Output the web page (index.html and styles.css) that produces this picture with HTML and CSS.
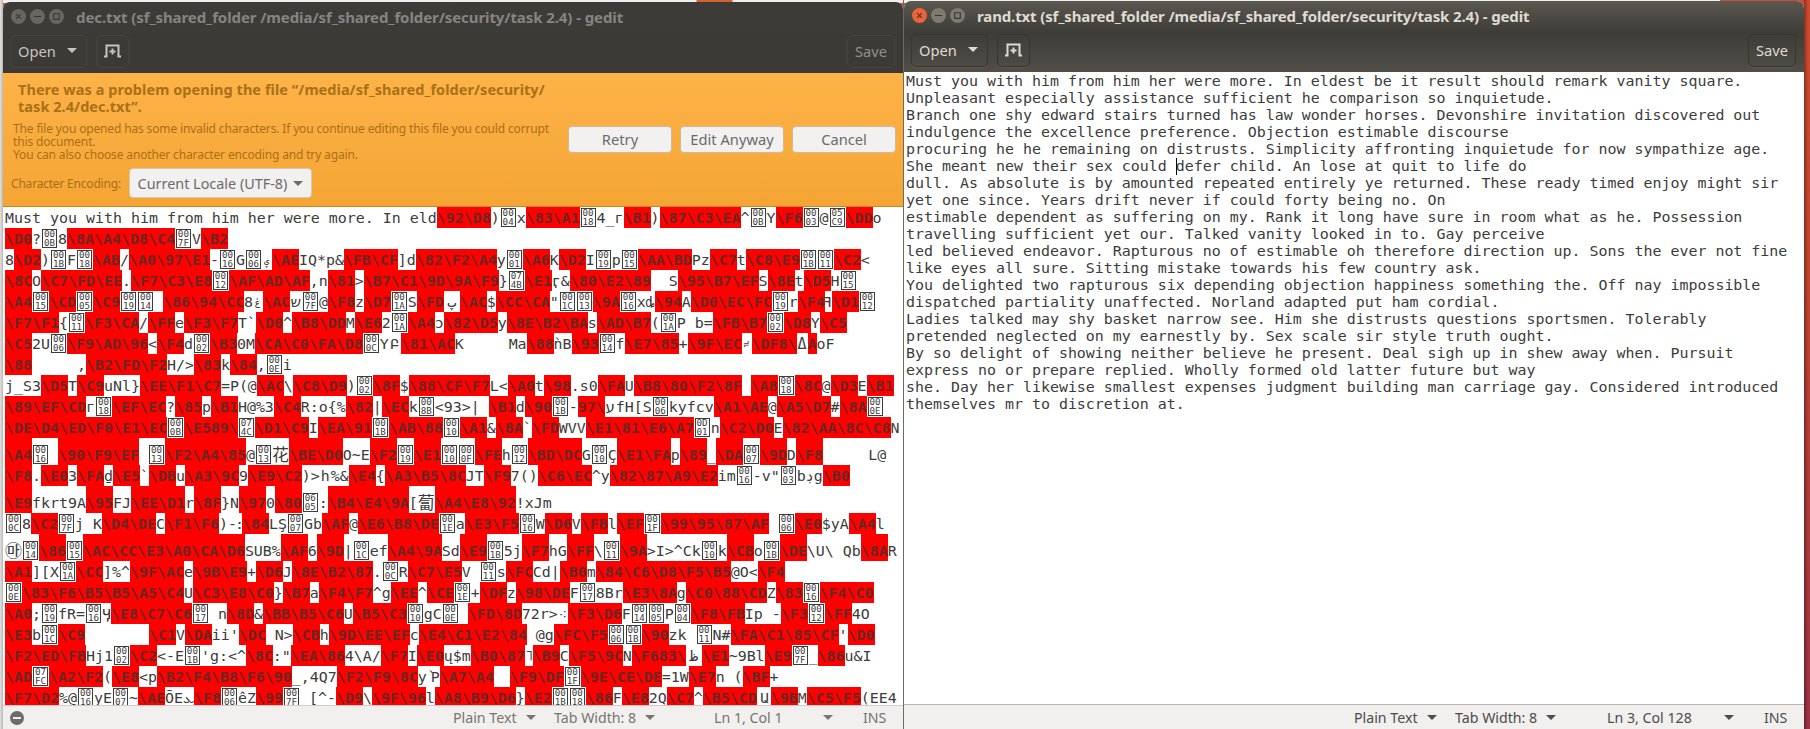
FILE: index.html
```html
<!DOCTYPE html>
<html lang="en">
<head>
<meta charset="utf-8">
<title>gedit</title>
<link rel="stylesheet" href="styles.css">
</head>
<body>
<div class="desktop">
<section class="window unfocused">
<header class="titlebar">
<span class="ctl close"><svg viewBox="0 0 16 16"><path d="M5.5 5.5l5 5M10.5 5.5l-5 5"/></svg></span>
<span class="ctl"><svg viewBox="0 0 16 16"><path d="M4 8h8"/></svg></span>
<span class="ctl"><svg viewBox="0 0 16 16"><path d="M5 5h6v6H5z"/></svg></span>
<h1 class="title title-dec">dec.txt (sf_shared_folder /media/sf_shared_folder/security/task 2.4) - gedit</h1>
</header>
<div class="toolbar">
<button class="tool open"><span>Open</span><i class="arrow"></i></button>
<button class="tool newtab"><svg width="17" height="14" viewBox="0 0 17 14"><path d="M0 12.5h2.5V1.5h12v11H17M8.500 4.500v6M5.500 7.500h6"/></svg></button>
<button class="tool save">Save</button>
</div>
<div class="infobar">
<div class="message">
<p class="primary"><span class="p1">There was a problem opening the file “/media/sf_shared_folder/security/</span><br><span class="p2">task 2.4/dec.txt”.</span></p>
<p class="secondary"><span class="s1">The file you opened has some invalid characters. If you continue editing this file you could corrupt</span><br>this document.<br><span class="s3">You can also choose another character encoding and try again.</span></p>
<div class="encoding"><span class="enc-label">Character Encoding:</span><button class="combo"><span>Current Locale (UTF-8)</span><i class="arrow"></i></button></div>
</div>
<div class="actions"><button>Retry</button><button>Edit Anyway</button><button>Cancel</button></div>
</div>
<div class="editor dump">
<div>Must you with him from him her were more. In eld<b>\92\D8</b>)<u>0004</u>x<b>\83\A1</b><u>0018</u>4_г<b>\B1</b>)<b>\87\C3\EA</b>^<u>000B</u>Y<b>\F6</b><u>0003</u>@<u>05C9</u><b>\DD</b>o</div>
<div><b>\D0</b>?<u>000B</u>8<b>\8A\A4\D8\C4</b><u>007F</u>V<b>\B2</b></div>
<div>8<b>\D2</b>)<u>001B</u>F<u>0018</u><b>\AB</b>/<b>\A0\97\E1</b>-<u>0016</u>G<u>0006</u><i class="g10 small">ۑ</i><b>\AE</b>IQ*p&amp;<b>\FB\CF</b>]d<b>\82\F2\A4</b>y<u>0001</u><b>\A6</b>K<b>\D2</b>I<u>0019</u>p<u>0015</u><b>\AA\BD</b>Pz<b>\C7</b>t<b>\C8\E9</b><u>001B</u><u>0011</u><b>\C2</b>&lt;</div>
<div><b>\8C</b>O<b>\C7\FD\EE</b>.<b>\F7\C3\E8</b><u>0012</u><b>\AF\AD\AF</b>,n<b>\81</b>&gt;<b>\B7\C1\9D\9A\F9</b>}<u>074B</u><b>\E1</b><i>ӷ</i>&amp;<b>\80\E2\89</b>  S<b>\95\B7\EF</b>S<b>\8E</b>t<b>\D5</b>H<u>0015</u></div>
<div><b>\A4</b><u>0015</u><b>\CD</b><u>0005</u><b>\C9</b><u>0019</u><u>0014</u> <b>\86\94\CC</b>8<i class="g10 small">ݟ</i><b>\AC</b><i class="g12">ש</i><u>007F</u>@<b>\F8</b>z<b>\D7</b><u>001A</u>S<b>\FD</b><i class="g16">پ</i><b>\AC</b>$<b>\CC\CA</b>"<u>001C</u><u>0013</u><b>\9A</b><u>0016</u>x<i>ȡ</i><b>\94</b>A<b>\D0\EC\FC</b><u>0019</u>r<b>\F4</b><i class="g7 flip">F</i><b>\D1</b><u>0012</u></div>
<div><b>\F7\F1</b>{<u>0011</u><b>\F3\CA</b>/<b>\FF</b>e<b>\F3\F7</b>T`<b>\D0</b>^<b>\B8\DD</b>M<b>\E6</b>2<u>001A</u><b>\A4</b><i>ɔ</i><b>\82\D5</b>y<b>\8E\B2\BA</b>s<b>\AD\B7</b>(<u>001A</u>P b=<b>\FB\B7</b><u>0002</u><b>\D8</b>Y<b>\C5</b></div>
<div><b>\C5</b>2U<u>0006</u><b>\F9\AD\96</b>&lt;<b>\F4</b>d<u>0002</u><b>\B3</b>0M<b>\CA\C0\FA\D8</b><u>000C</u>Y<i class="g12">Բ</i><b>\81\AC</b>K	Ma<b>\88</b>ǹB<b>\93</b><u>0014</u>f<b>\E7\85</b>+<b>\9F\EC</b><i class="g10 small">≓</i><b>\DF8\</b><i class="g11">Δ</i><b>A</b>oF</div>
<div><b>\88</b>	,<b>\B2\FD\F2</b>H/&gt;<b>\83</b>k<b>\84</b>,<u>000E</u>i</div>
<div>j_S3<b>\D5</b>T<b>\C9</b>uNl}<b>\EE\F1\C7</b>=P(@<b>\AC</b>\<b>\C8\D9</b>)<u>0002</u><b>\8F</b>$<b>\88\CF\F7</b>L&lt;<b>\A0</b>t<b>\98</b>.s0<b>\FA</b>U<b>\B8\80\F2\8F</b> <b>\A8</b><u>0018</u><b>\8C</b>@<b>\D3</b>E<b>\B1</b></div>
<div><b>\89\EF\CD</b>г<u>0018</u><b>\EF\EC</b>?<b>\85</b>p<b>\B1</b>H@%3<b>\C4</b>R:o{%<b>\82</b>|<b>\EC</b>k<u>008B</u>&lt;93&gt;| <b>\B1</b>d<b>\90</b><u>001B</u>-<b>97\</b><i class="g11">ע</i>fH[S<u>0006</u>kyfcv<b>\A1\AE</b>@<b>\A5\D7</b>#<b>\8A</b><u>000E</u></div>
<div><b>\DE\D4\ED\F0\E1\EC</b><u>000B</u><b>\E589\</b><u>074C</u><b>\D1\C9</b>I<b>\EA\91</b><u>001B</u><b>\AB\88</b><u>0010</u><b>\A1</b>&amp;<b>\8A</b>`<b>\FD</b>WVV<b>\E1\81\E6\A7</b><u>0D01</u>n<b>\C2\D0</b>E<b>\82\AA\8C\C8</b>N</div>
<div class="tall"><b>\A4</b><u>0016</u> <b>\90\F9\EF</b> <u>0013</u><b>\F2\A4\85</b>@<u>0013</u><i class="g17">花</i><b>\BE\D0</b>O~E<b>\F2</b><u>0019</u><b>\E1</b><u>0010</u><u>000F</u><b>\FE</b>h<u>0012</u><b>\BD\DC</b>G<u>0010</u><i>Ç</i><b>\E1\FA</b>p<b>\89</b>_<b>\DA</b><u>0007</u><b>\9D</b>D<b>\F8</b>	L@</div>
<div><b>\F8</b>.<b>\E0</b>3<b>\FA</b><i>ḏ</i><b>\E5</b>`<b>\DB</b>u<b>\A3\9C</b>9<b>\E9\C2</b>)&gt;<i class="g11">հ</i>%&amp;<b>\E4</b>{<b>\A3\B5\8C</b>JT<b>\F9</b>7()<b>\C6\EC</b>^y<b>\82\87\A9\E2</b>im<u>0016</u>-v"<u>0003</u>b<i class="g8">ڊ</i>g<b>\B0</b></div>
<div class="tall"><b>\E9</b>fkrt9A<b>\95</b>FJ<b>\EE\D1</b>r<b>\8F</b>}N<b>\97</b>0<b>\80</b><u>0605</u>:<b>\B4\E4\9A</b>[<i class="g17">蔔</i><b>\A4\E8\92</b>!xJm</div>
<div><u>000C</u>8<b>\C2</b><u>007F</u>j K<b>\D4\DE</b>C<b>\F1\F6</b>)<i class="g14">-:</i><b>\84</b>LŞ<u>0007</u>Gb<b>\AF</b>@<b>\E6\B8\DE</b><u>001E</u>a<b>\E3\F5</b><u>0016</u>W<b>\D6</b>V<b>\FB</b>l<b>\EF</b><u>001F</u><b>\99\95\87\AF</b> <u>0006</u><b>\E0</b>$yA<b>\A4</b>l</div>
<div class="tall"><i class="g17">㉲</i><u>0014</u><b>\86</b><u>0015</u><b>\AC\CC\E3\A0\CA\D6</b>SUB%<b>\AF</b>6<b>\9D</b>|<u>001C</u>ef<b>\A4\9A</b>Sd<b>\E9</b><u>001B</u>5j<b>\F7</b>hG<b>\FF</b>\<u>0011</u><b>\9A</b>&gt;I&gt;^Ck<u>0010</u>k<b>\CB</b>o<u>001B</u><b>\DE</b>\U\ Qb<b>\8A</b>R</div>
<div><b>\A1</b>][X<u>001A</u><b>\CC</b>]%^<b>\9F\AC</b>e<b>\9B\E9</b>+<b>\D6</b>J<b>\8E\B2\87</b>.<u>000C</u>R<b>\C7\E5</b>V <u>0011</u>s<b>\FC</b>Cd|<b>\B0</b>m<b>\84\C6\D8\F5\B5</b>@O&lt;<b>\F4</b></div>
<div><u>000E</u><b>\83\F6\B5\B5\A5\C4</b>U<b>\C3\E8\C0</b>}<b>\B7</b>a<b>\F4\F7</b>^g<b>\EE</b>^<b>\CE</b><u>001E</u>+<b>\DF</b>z<b>\98\DE</b>F<u>0017</u>8Br<b>\E3\8A</b>g<b>\C0\88\CD</b>Z<b>\83</b><u>0016</u><b>\F4\C0</b></div>
<div><b>\A0</b>;<u>0019</u>fR=<u>0016</u><i>Ӌ</i><b>\E8\C7\C6</b><u>0017</u> n<b>\8D</b>&amp;<b>\BB\B5\C6</b>U<b>\B5\C3</b><u>0010</u>gC<u>000E</u> <b>\FD\8D</b>72r&gt;<i class="g10">⁖</i><b>\F3\D6</b>F<u>0014</u><u>0005</u>P<u>0004</u><b>\F8\FB</b>Ip -<b>\F3</b><u>0012</u><b>\FF</b>4O</div>
<div><b>\E3</b>b<u>001C</u><b>\C9</b>	<b>\C1</b>V<b>\DA</b>ii'<b>\DC</b> N&gt;<b>\CB</b>h<b>\9D\EE\EF</b>c<b>\E4\C1\E2\84</b> @g<b>\FC\F5</b><u>0006</u><u>001B</u><b>\90</b>zk <u>0011</u>N#<b>\FA\C1\85\CF</b>'<b>\D0</b></div>
<div><b>\F2\ED\FB</b>Hj1<u>0002</u><b>\C2</b>&lt;-E<u>001B</u>'g:&lt;^<b>\8C</b>:"<b>\EA\86</b>4\A/<b>\F7</b>I<b>\E0</b>ų$m<b>\B0\87</b><i class="g8">˥</i><b>\B9</b>C<b>\F5\9C</b>N<b>\F683\</b><i class="g16">ظ</i><b>\E1</b>~9Bl<b>\E9</b><u>007F</u>_<b>\86</b>u&amp;I</div>
<div><b>\AD</b><u>07FC</u><b>\A2\F2</b>(<b>\E8</b>&lt;p<b>\B2\F4\B8\F6\90</b>_,4Q7<b>\F2\F9\8C</b>y<i class="g4">՝</i>P<b>\A7\A4</b><i class="g16"></i><b>\F9\DF</b><u>001F</u><b>\9E\CE\DE</b>=1W<b>\E7</b>n (<b>\BF</b>+</div>
<div><b>\F7\D2</b>%@<u>0016</u>yE<u>0007</u>~<b>\AE</b>ÕE<i class="g11">ܥ</i><b>\F8</b><u>0006</u>êZ<b>\99</b><u>007F</u> [^-<b>\D9</b>\<b>\9F\96</b>l<b>\A8\B9\D6</b>}<b>\E2</b><u>001B</u><u>0018</u><b>\86</b>F<b>\E8</b>2Q<b>\C7</b>^<b>\B5\CD</b><i class="g14">Ա</i><b>\9B</b>M<b>\C5\F5</b>(EE4</div>
</div>
<footer class="statusbar"><svg class="stop" width="14" height="14" viewBox="0 0 14 14"><circle cx="7" cy="7" r="7"/><path d="M3 7h8"/></svg><span class="lang">Plain Text</span><i class="arrow"></i><span class="tab">Tab Width: 8</span><i class="arrow"></i><span class="pos">Ln 1, Col 1</span><i class="arrow"></i><span class="ins">INS</span></footer>
</section>
<div class="seam"></div>
<section class="window focused">
<header class="titlebar">
<span class="ctl close"><svg viewBox="0 0 16 16"><path d="M5.5 5.5l5 5M10.5 5.5l-5 5"/></svg></span>
<span class="ctl"><svg viewBox="0 0 16 16"><path d="M4 8h8"/></svg></span>
<span class="ctl"><svg viewBox="0 0 16 16"><path d="M5 5h6v6H5z"/></svg></span>
<h1 class="title title-rand">rand.txt (sf_shared_folder /media/sf_shared_folder/security/task 2.4) - gedit</h1>
</header>
<div class="toolbar">
<button class="tool open"><span>Open</span><i class="arrow"></i></button>
<button class="tool newtab"><svg width="17" height="14" viewBox="0 0 17 14"><path d="M0 12.5h2.5V1.5h12v11H17M8.500 4.500v6M5.500 7.500h6"/></svg></button>
<button class="tool save">Save</button>
</div>
<pre class="editor plain">Must you with him from him her were more. In eldest be it result should remark vanity square.
Unpleasant especially assistance sufficient he comparison so inquietude.
Branch one shy edward stairs turned has law wonder horses. Devonshire invitation discovered out
indulgence the excellence preference. Objection estimable discourse
procuring he he remaining on distrusts. Simplicity affronting inquietude for now sympathize age.
She meant new their sex could <span class="caret"></span>defer child. An lose at quit to life do
dull. As absolute is by amounted repeated entirely ye returned. These ready timed enjoy might sir
yet one since. Years drift never if could forty being no. On
estimable dependent as suffering on my. Rank it long have sure in room what as he. Possession
travelling sufficient yet our. Talked vanity looked in to. Gay perceive
led believed endeavor. Rapturous no of estimable oh therefore direction up. Sons the ever not fine
like eyes all sure. Sitting mistake towards his few country ask.
You delighted two rapturous six depending objection happiness something the. Off nay impossible
dispatched partiality unaffected. Norland adapted put ham cordial.
Ladies talked may shy basket narrow see. Him she distrusts questions sportsmen. Tolerably
pretended neglected on my earnestly by. Sex scale sir style truth ought.
By so delight of showing neither believe he present. Deal sigh up in shew away when. Pursuit
express no or prepare replied. Wholly formed old latter future but way
she. Day her likewise smallest expenses judgment building man carriage gay. Considered introduced
themselves mr to discretion at.</pre>
<footer class="statusbar"><span class="lang">Plain Text</span><i class="arrow"></i><span class="tab">Tab Width: 8</span><i class="arrow"></i><span class="pos">Ln 3, Col 128</span><i class="arrow"></i><span class="ins">INS</span></footer>
</section>
</div>
</body>
</html>
```
FILE: styles.css
```css
* { box-sizing: border-box; }
body { margin: 0; width: 1810px; height: 729px; overflow: hidden; font: 14.7px "Noto Sans", "Open Sans", sans-serif; }
h1, p, pre { margin: 0; }
button { font: inherit; color: inherit; padding: 0; margin: 0; }
.desktop {
  display: flex; height: 729px; padding-left: 3px;
  background:
    linear-gradient(90deg, #e4e2e0, #b9b6b2) 0 0 / 3px 100% no-repeat,
    linear-gradient(90deg, #efeeec 245px, #d2622f 246px 281px, #efeeec 282px) 451px 0 / 453px 3px no-repeat,
    linear-gradient(#f0efed, #f0efed) 0 0 / 1720px 3px no-repeat,
    linear-gradient(90deg, #0005, #0000) 1804px 0 / 4px 100% no-repeat,
    linear-gradient(#cc4a2f, #c0432f 40%, #9c3245);
}
.seam { width: 1px; background: #6d6a66; }
.window { width: 900px; display: flex; flex-direction: column; overflow: hidden; background: #fff; }
.unfocused { margin-top: 2px; border-radius: 7px 7px 0 0; }
.focused { margin-top: 1px; border-radius: 7px 7px 0 0; }

.titlebar { flex: none; height: 31px; display: flex; align-items: center; gap: 4px; padding: 0 0 2px 8px; background: #3d3b37; color: #868480; }
.focused .titlebar { background: linear-gradient(#5a5850, #3d3c37); color: #dfdbd2; }
.ctl { width: 15px; height: 15px; border-radius: 50%; background: #686661; display: flex; }
.ctl svg { width: 15px; height: 15px; fill: none; stroke: #3a3935; stroke-width: 1.2; }
.focused .ctl { background: #7d7a72; }
.focused .close { background: #ee6336; }
.title { font-size: 15px; font-weight: 700; white-space: nowrap; margin-left: 8px; line-height: 28px; }
.title-dec { letter-spacing: -0.09px; }
.title-rand { letter-spacing: -0.13px; }

.toolbar { flex: none; height: 40px; display: flex; padding: 2px 8px 5px 7px; background: #3b3a36; color: #c6c4bf; }
.focused .toolbar { background: linear-gradient(#3d3c37, #504e47); color: #dfdbd2; }
.tool { height: 33px; border: 1px solid #45443f; border-radius: 5px; background: none; display: flex; align-items: center; justify-content: center; padding-bottom: 2px; }
.focused .tool { border-color: #38372f; box-shadow: 0 1px #5a5850; }
.open { width: 77px; gap: 11px; padding-right: 2px; }
.newtab { width: 33px; margin-left: 9px; }
.newtab svg { fill: none; stroke: currentColor; stroke-width: 2; }
.save { width: 48px; margin-left: auto; }
.unfocused .save { color: #92908b; }
.arrow { display: inline-block; border: 5px solid transparent; border-top-color: currentColor; border-bottom: 0; }

.infobar { flex: none; height: 134px; display: flex; background: linear-gradient(#feb348, #f4a534); border-bottom: 1px solid #c98724; color: #a87019; }
.message { width: 552px; padding: 8px 0 0 8px; white-space: nowrap; }
.primary { font-size: 14.5px; font-weight: 700; line-height: 17px; padding-left: 7px; letter-spacing: 0.05px; }
.secondary { font-size: 12px; line-height: 13px; padding: 7px 0 0 2px; letter-spacing: -0.15px; }
.encoding { display: flex; align-items: center; margin-top: 7px; }
.enc-label { width: 118px; font-size: 12px; letter-spacing: -0.2px; }
.combo { width: 183px; height: 30px; display: flex; align-items: center; justify-content: center; gap: 6px; border: 1px solid #d5c7b3; border-radius: 4px; background: #f2f1f0; color: #6b6b6b; white-space: nowrap; font-size: 14.4px; }
.actions { display: flex; gap: 8px; padding: 53px 0 0 13px; }
.actions button { width: 104px; height: 27px; padding-bottom: 2px; border: 1px solid #cbbba5; border-radius: 4px; background: #f2f1f0; color: #6b6b6b; line-height: 22px; }

.editor { flex: 1; min-height: 0; overflow: hidden; padding-left: 2px; background: #fff; color: #3c3c3c; font-family: "DejaVu Sans Mono", "DejaVu Sans", "Noto Sans CJK SC", monospace; font-size: 14.95px; white-space: pre; }
.plain { line-height: 17px; padding-top: 1px; }
.caret { display: inline-block; width: 1px; height: 17px; margin-right: -1px; background: #000; vertical-align: top; }
.dump { white-space: normal; }
.dump > div { height: 21px; line-height: 22px; white-space: pre; tab-size: 8; }
.dump > .tall { height: 27px; padding-top: 6px; background: none; }
.dump b, .dump u, .dump i { display: inline-block; height: 21px; vertical-align: top; text-decoration: none; font-style: normal; }
.dump b { background: #f00; color: #6c2620; }
.dump .tall b { box-shadow: 0 -6px #f00; }
.dump u { width: 15px; height: 19px; margin: 1px; border: 1px solid #3c3c3c; font-size: 9.2px; line-height: 9px; word-break: break-all; white-space: normal; overflow: hidden; text-align: center; }
.dump u::before { content: ""; display: block; margin-top: -1px; }
.dump i { width: 9px; text-align: center; }
.dump i.g4 { width: 4px; }
.dump i.g7 { width: 7px; }
.dump i.g8 { width: 8px; }
.dump i.g10 { width: 10px; }
.dump i.g11 { width: 11px; }
.dump i.g12 { width: 12px; }
.dump i.g14 { width: 14px; letter-spacing: -2px; }
.dump i.g16 { width: 16px; }
.dump i.g17 { width: 17px; font-size: 17px; }
.dump i.small { font-size: 9px; }
.dump i.flip { transform: scaleX(-1); }

.statusbar { flex: none; height: 24px; display: flex; align-items: center; background: #f1f0ee; border-top: 1px solid #cfccc8; color: #77756f; white-space: nowrap; font-size: 14.2px; }
.focused .statusbar { height: 25px; color: #4c4c4c; border-top-color: #b8b5b1; }
.stop { margin-left: 7px; fill: #6c6c6c; stroke: #f1f0ee; stroke-width: 2; }
.stop circle { stroke: none; }
.lang { width: 73px; margin-left: 450px; }
.unfocused .lang { margin-left: 429px; }
.tab { width: 91px; margin-left: 18px; }
.pos { width: 117px; margin-left: 51px; }
.unfocused .pos { width: 109px; margin-left: 59px; }
.ins { margin-left: 30px; }
```
